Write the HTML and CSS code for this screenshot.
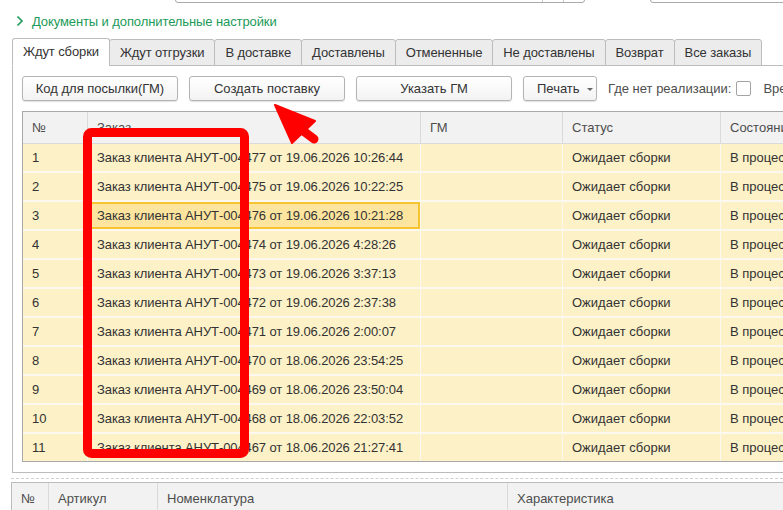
FILE: index.html
```html
<!DOCTYPE html>
<html lang="ru">
<head>
    <meta charset="UTF-8">
    <meta name="viewport" content="width=device-width, initial-scale=1.0">
    <title>Заказы клиентов</title>
    <link rel="stylesheet" href="styles.css">
</head>
<body>

    <div class="top-fields">
        <div class="field field-main"><span class="field-btn"></span><span class="field-btn"></span></div>
        <div class="field field-side"></div>
    </div>

    <div class="group-title">
        <svg class="chevron" width="8" height="12" viewBox="0 0 8 12"><path d="M1.5 1.5 L6 6 L1.5 10.5" fill="none" stroke="#1c9a57" stroke-width="1.6"/></svg>
        <span>Документы и дополнительные настройки</span>
    </div>

    <div class="tabs">
        <div class="tab active">Ждут сборки</div>
        <div class="tab">Ждут отгрузки</div>
        <div class="tab">В доставке</div>
        <div class="tab">Доставлены</div>
        <div class="tab">Отмененные</div>
        <div class="tab">Не доставлены</div>
        <div class="tab">Возврат</div>
        <div class="tab">Все заказы</div>
        <div class="tab-rest"></div>
    </div>

    <div class="panel">
        <div class="toolbar">
            <button class="btn btn-wide">Код для посылки(ГМ)</button>
            <button class="btn btn-wide">Создать поставку</button>
            <button class="btn btn-wide">Указать ГМ</button>
            <button class="btn btn-print">Печать <span class="caret"></span></button>
            <span class="filter">Где нет реализации:</span>
            <span class="checkbox"></span>
            <span class="filter filter-next">Время сборки:</span>
        </div>

        <table class="grid orders">
            <colgroup>
                <col class="c-num"><col class="c-order"><col class="c-gm"><col class="c-status"><col class="c-state">
            </colgroup>
            <thead>
                <tr><th>№</th><th>Заказ</th><th>ГМ</th><th>Статус</th><th>Состояние</th></tr>
            </thead>
            <tbody id="orderRows"></tbody>
        </table>
    </div>

    <div class="splitter"></div>

    <table class="grid goods">
        <colgroup>
            <col class="g-num"><col class="g-art"><col class="g-name"><col class="g-char">
        </colgroup>
        <thead>
            <tr><th>№</th><th>Артикул</th><th>Номенклатура</th><th>Характеристика</th></tr>
        </thead>
    </table>

    <!-- пометки поверх формы -->
    <svg class="marks" width="783" height="510" viewBox="0 0 783 510">
        <rect x="87.5" y="132.5" width="157" height="321" rx="4" fill="none" stroke="#ff0000" stroke-width="9"/>
        <polygon points="275,105 315,121 292,143" fill="#ff0000" stroke="#ff0000" stroke-width="2" stroke-linejoin="round"/>
        <line x1="302" y1="130" x2="314" y2="139" stroke="#ff0000" stroke-width="9" stroke-linecap="round"/>
    </svg>

    <script>
        const orders = [
            ['004477', '19.06.2026 10:26:44'],
            ['004475', '19.06.2026 10:22:25'],
            ['004476', '19.06.2026 10:21:28'],
            ['004474', '19.06.2026 4:28:26'],
            ['004473', '19.06.2026 3:37:13'],
            ['004472', '19.06.2026 2:37:38'],
            ['004471', '19.06.2026 2:00:07'],
            ['004470', '18.06.2026 23:54:25'],
            ['004469', '18.06.2026 23:50:04'],
            ['004468', '18.06.2026 22:03:52'],
            ['004467', '18.06.2026 21:27:41']
        ];
        const body = document.getElementById('orderRows');

        orders.forEach((order, index) => {
            const row = document.createElement('tr');
            const cls = index === 2 ? 'order current' : 'order';
            row.innerHTML = `
                <td>${index + 1}</td>
                <td class="${cls}">Заказ клиента АНУТ-${order[0]} от ${order[1]}</td>
                <td></td>
                <td>Ожидает сборки</td>
                <td>В процессе</td>
            `;
            body.appendChild(row);
        });
    </script>

</body>
</html>
```

FILE: styles.css
```css
html, body {
    overflow: hidden;
}
body {
    margin: 0;
    width: 783px;
    height: 510px;
    background-color: #fff;
    font-family: "Liberation Sans", Arial, sans-serif;
    font-size: 13px;
    color: #4d4d4d;
}

/* поля шапки, видна только нижняя кромка */
.top-fields {
    display: flex;
    height: 3px;
    overflow: hidden;
}
.field {
    flex-shrink: 0;
    height: 21px;
    margin-top: -20px;
    border: 1px solid #a9a9a9;
    border-radius: 3px;
    display: flex;
    justify-content: flex-end;
}
.field-main {
    margin-left: 175px;
    width: 408px;
}
.field-side {
    margin-left: 65px;
    width: 200px;
}
.field-btn {
    width: 20px;
    border-left: 1px solid #c8c8c8;
}

.group-title {
    display: flex;
    align-items: center;
    height: 20px;
    margin-top: 8px;
    padding-left: 16px;
    color: #1c9a57;
    letter-spacing: -0.1px;
}
.chevron {
    margin-right: 8px;
}

/* закладки */
.tabs {
    display: flex;
    align-items: flex-end;
    height: 27px;
    margin-top: 8px;
    margin-left: 12px;
}
.tab {
    flex-shrink: 0;
    height: 25px;
    line-height: 25px;
    padding: 0 10px;
    margin-right: -1px;
    background-color: #ececec;
    border: 1px solid #bcbcbc;
    border-radius: 3px 3px 0 0;
    color: #333;
    white-space: nowrap;
    letter-spacing: -0.1px;
}
.tab.active {
    height: 26px;
    background-color: #fff;
    border-bottom-color: #fff;
}
.tab-rest {
    flex: 1;
    border-bottom: 1px solid #bcbcbc;
}

.panel {
    margin-left: 12px;
    border-left: 1px solid #bcbcbc;
    border-bottom: 1px solid #bcbcbc;
    padding: 10px 0 10px 9px;
}

.toolbar {
    display: flex;
    align-items: center;
    height: 25px;
    white-space: nowrap;
}
.toolbar > * {
    flex-shrink: 0;
}
.btn {
    height: 25px;
    margin-right: 11px;
    padding: 0;
    font-family: inherit;
    font-size: 13px;
    color: #333;
    background: linear-gradient(#fff, #f3f3f3);
    border: 1px solid #b4b4b4;
    border-radius: 3px;
    box-shadow: 0 1px 1px rgba(0, 0, 0, 0.12);
}
.btn-wide {
    width: 156px;
}
.btn-print {
    width: 74px;
    text-align: left;
    padding-left: 13px;
}
.caret {
    display: inline-block;
    margin-left: 4px;
    vertical-align: middle;
    border-left: 3px solid transparent;
    border-right: 3px solid transparent;
    border-top: 3px solid #666;
}
.filter {
    color: #4d4d4d;
}
.checkbox {
    width: 13px;
    height: 13px;
    margin-left: 5px;
    border: 1px solid #a3a3a3;
    border-radius: 2px;
    background-color: #fff;
}
.filter-next {
    margin-left: 12px;
}

/* таблицы */
.grid {
    table-layout: fixed;
    border-collapse: separate;
    border-spacing: 0;
}
.grid th {
    height: 31px;
    padding: 0 9px;
    text-align: left;
    font-weight: normal;
    color: #4d4d4d;
    background-color: #f2f2f2;
    border-right: 1px solid #dadada;
    border-bottom: 1px solid #dadada;
    white-space: nowrap;
    overflow: hidden;
}
.grid td {
    height: 27px;
    padding: 0 9px;
    color: #333;
    background-color: #fdf1c7;
    border-right: 1px solid #fbf8ef;
    border-bottom: 2px solid #fbf8ef;
    white-space: nowrap;
    overflow: hidden;
}
.grid td.order {
    letter-spacing: -0.1px;
}
.grid td.current {
    background-color: #fde59f;
    box-shadow: inset 0 0 0 2px #f6c431;
}

.orders {
    width: 898px;
    margin-top: 10px;
    border: 1px solid #a9a9a9;
}
.orders tbody tr:last-child td {
    border-bottom: none;
}
.c-num { width: 65px; }
.c-order { width: 333px; }
.c-gm { width: 142px; }
.c-status { width: 158px; }
.c-state { width: 200px; }

.splitter {
    margin: 5px 0 0 11px;
    border-top: 1px dashed #d0d0d0;
}

.goods {
    width: 900px;
    margin: 3px 0 0 11px;
    border-top: 1px solid #bcbcbc;
    border-left: 1px solid #bcbcbc;
}
.g-num { width: 37px; }
.g-art { width: 109px; }
.g-name { width: 350px; }
.g-char { width: 404px; }

.marks {
    position: absolute;
    top: 0;
    left: 0;
    pointer-events: none;
}
```
